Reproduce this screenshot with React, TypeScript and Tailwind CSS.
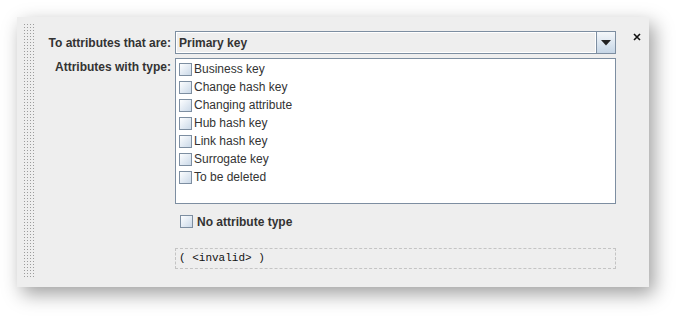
import React from 'react';

const TYPES = [
  'Business key',
  'Change hash key',
  'Changing attribute',
  'Hub hash key',
  'Link hash key',
  'Surrogate key',
  'To be deleted',
];

function Check() {
  return (
    <span className="block w-[13px] h-[13px] shrink-0 border border-[#7d8ea1] bg-gradient-to-br from-[#fdfeff] to-[#cbd9e8]" />
  );
}

export default function App() {
  return (
    <div
      className="w-[697px] h-[335px] bg-white pl-[17px] pt-[17px] text-[#333333]"
      style={{ fontFamily: '"Liberation Sans", Arial, sans-serif' }}
    >
      <div className="flex w-[632px] h-[270px] bg-[#eeeeee] shadow-[5px_7px_18px_rgba(0,0,0,0.38)]">
        {/* grip strip */}
        <div className="ml-[6px] mt-[6px] w-[12px] h-[254px] bg-[radial-gradient(circle,#9c9c9c_0.7px,transparent_0.9px)] bg-[length:3px_3px]" />

        <div className="flex flex-col pt-[14px]">
          {/* combo row */}
          <div className="flex items-center h-[23px]">
            <div className="w-[136px] text-right text-[12px] font-bold">To attributes that are:</div>
            <div className="ml-[4px] flex w-[441px] h-[23px] border border-[#7d8ea1]">
              <div className="flex-1 flex items-center pl-[2px] border border-white text-[12px] font-bold bg-[#eeeeee]">
                Primary key
              </div>
              <div className="w-[19px] flex items-center justify-center border-l border-[#7d8ea1] bg-gradient-to-b from-[#f4f7fa] to-[#c6d6e6]">
                <svg width="10" height="6" viewBox="0 0 10 6">
                  <path d="M0 0H10L5 5.5Z" fill="#222" />
                </svg>
              </div>
            </div>
          </div>

          {/* list row */}
          <div className="flex mt-[4px]">
            <div className="w-[136px] text-right text-[12px] font-bold">Attributes with type:</div>
            <div className="ml-[4px] w-[441px] h-[146px] border border-[#7d8ea1] bg-white pt-[1px] pl-[3px]">
              {TYPES.map((t) => (
                <div key={t} className="flex items-center h-[18px] gap-[2px] text-[12px]">
                  <Check />
                  <span>{t}</span>
                </div>
              ))}
            </div>
          </div>

          {/* no attribute type */}
          <div className="flex items-center mt-[11px] ml-[145px] gap-[4px] h-[13px]">
            <Check />
            <span className="text-[12px] font-bold">No attribute type</span>
          </div>

          {/* expression */}
          <div
            className="mt-[20px] ml-[140px] w-[441px] h-[21px] border border-dashed border-[#c4c4c4] flex items-center pl-[3px] text-[11px] text-[#111]"
            style={{ fontFamily: '"Liberation Mono", "Courier New", monospace' }}
          >
            {'( <invalid> )'}
          </div>
        </div>

        {/* close */}
        <div className="ml-[17px] mt-[16px]">
          <svg width="8" height="8" viewBox="0 0 8 8">
            <path d="M1 1L7 7M7 1L1 7" stroke="#111" strokeWidth="1.6" />
          </svg>
        </div>
      </div>
    </div>
  );
}
